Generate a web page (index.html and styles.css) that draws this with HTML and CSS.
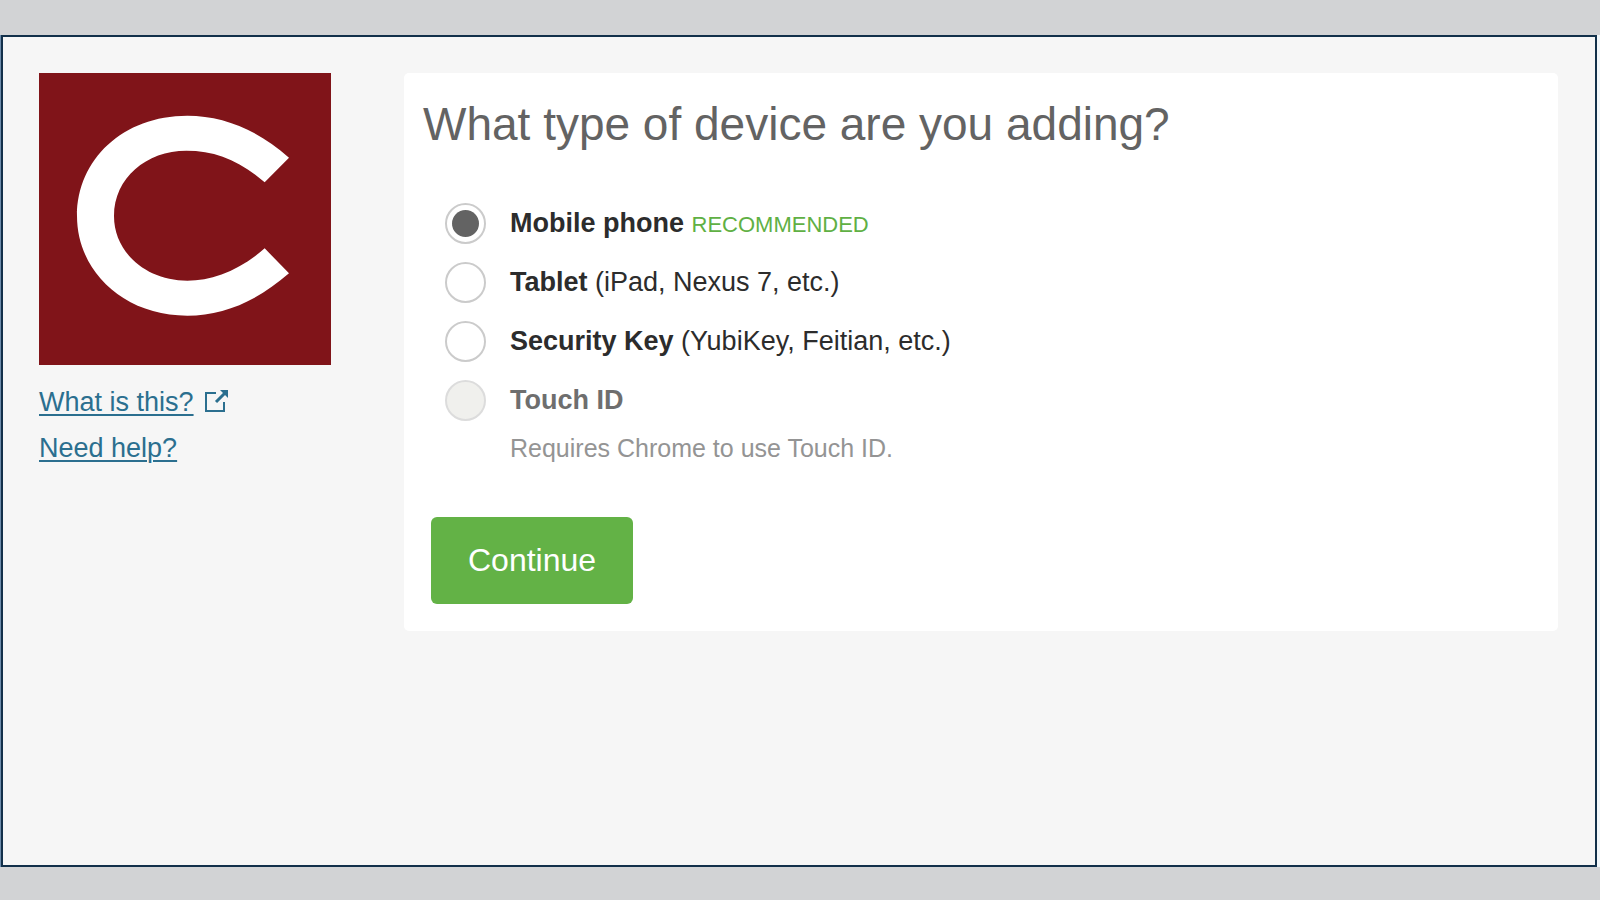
FILE: index.html
```html
<!DOCTYPE html>
<html lang="en">
<head>
    <meta charset="UTF-8">
    <meta name="viewport" content="width=device-width, initial-scale=1.0">
    <title>Add a device</title>
    <link rel="stylesheet" href="styles.css">
</head>
<body>
    <div class="page">
        <div class="frame">
            <aside class="sidebar">
                <svg class="logo" viewBox="0 0 876 876" role="img" aria-label="Logo">
                    <rect width="876" height="876" fill="#801419"/>
                    <path fill="#fff" d="M750 254 C655 170 552 128 445 128 C252 128 114 259 114 429 C114 593 252 728 445 728 C552 728 655 684 750 601 L677 526 C603 591 520 623 445 623 C322 623 225 539 225 429 C225 315 322 233 442 233 C530 233 603 263 677 328 Z"/>
                </svg>
                <nav class="links">
                    <div class="link-row">
                        <a href="#">What is this?</a>
                        <svg class="external" viewBox="0 0 24 24" aria-hidden="true">
                            <path d="M12 3H2V21H20V12" fill="none" stroke="#2b6f8f" stroke-width="2"/>
                            <path d="M12 12L21 3" fill="none" stroke="#2b6f8f" stroke-width="3"/>
                            <path d="M16 0H24V8Z" fill="#2b6f8f"/>
                        </svg>
                    </div>
                    <div class="link-row">
                        <a href="#">Need help?</a>
                    </div>
                </nav>
            </aside>

            <main class="card">
                <h1>What type of device are you adding?</h1>
                <form>
                    <div class="options">
                        <div class="option">
                            <input type="radio" id="phone" name="device" value="phone" checked>
                            <label for="phone"><b>Mobile phone</b> <span class="recommended">RECOMMENDED</span></label>
                        </div>
                        <div class="option">
                            <input type="radio" id="tablet" name="device" value="tablet">
                            <label for="tablet"><b>Tablet</b> (iPad, Nexus 7, etc.)</label>
                        </div>
                        <div class="option">
                            <input type="radio" id="key" name="device" value="key">
                            <label for="key"><b>Security Key</b> (YubiKey, Feitian, etc.)</label>
                        </div>
                        <div class="option disabled">
                            <input type="radio" id="touchid" name="device" value="touchid" disabled>
                            <label for="touchid"><b>Touch ID</b></label>
                        </div>
                    </div>
                    <p class="note">Requires Chrome to use Touch ID.</p>
                    <button type="button">Continue</button>
                </form>
            </main>
        </div>
    </div>
</body>
</html>
```

FILE: styles.css
```css
* {
    box-sizing: border-box;
}
body {
    font-family: "Liberation Sans", Arial, sans-serif;
    margin: 0;
    font-size: 27px;
    color: #2c2c2c;
    background-color: #d2d3d5;
}
.page {
    display: flex;
    min-height: 100vh;
    padding: 35px 0 33px;
}
.frame {
    flex: 1;
    display: grid;
    grid-template-columns: 292px 1fr;
    gap: 73px;
    align-items: start;
    margin: 0 3px 0 1px;
    padding: 36px 37px 36px 36px;
    background-color: #f6f6f6;
    border: 2px solid #12304a;
    box-shadow: 3px 0 0 #f3f8fb, -1px 0 0 #6f8dac;
}
.logo {
    display: block;
    width: 100%;
}
.links {
    margin-top: 14px;
}
.link-row {
    display: flex;
    align-items: center;
    gap: 10px;
    line-height: 46px;
}
.link-row a {
    color: #2b6f8f;
    text-decoration-thickness: 2px;
    text-underline-offset: 3px;
}
.external {
    width: 24px;
    height: 24px;
}
.card {
    padding: 23px 19px 27px;
    background: #fff;
    border-radius: 5px;
}
h1 {
    margin: 0 0 51px;
    font-size: 46px;
    line-height: 56px;
    font-weight: normal;
    color: #636363;
}
.options {
    display: flex;
    flex-direction: column;
    gap: 18px;
    padding-left: 22px;
}
.option {
    display: flex;
    align-items: center;
    gap: 24px;
    line-height: 41px;
}
input[type="radio"] {
    appearance: none;
    flex-shrink: 0;
    width: 41px;
    height: 41px;
    margin: 0;
    border: 2px solid #cbcbcb;
    border-radius: 50%;
    background: #fff;
}
input[type="radio"]:checked {
    padding: 5px;
    background: #636363 content-box;
}
input[type="radio"]:disabled {
    border-color: #dcdcdc;
    background: #f0f0ed;
}
.recommended {
    font-size: 22px;
    line-height: 1;
    color: #60b044;
}
.disabled {
    color: #6e6e6e;
}
.note {
    margin: 11px 0 53px 87px;
    font-size: 25px;
    line-height: 32px;
    color: #949494;
}
button {
    display: block;
    margin-left: 8px;
    padding: 25px 37px;
    font-family: inherit;
    font-size: 32px;
    line-height: 37px;
    color: #fff;
    background: #63b246;
    border: none;
    border-radius: 6px;
    cursor: pointer;
}
button:hover {
    background: #549c3a;
}
```
